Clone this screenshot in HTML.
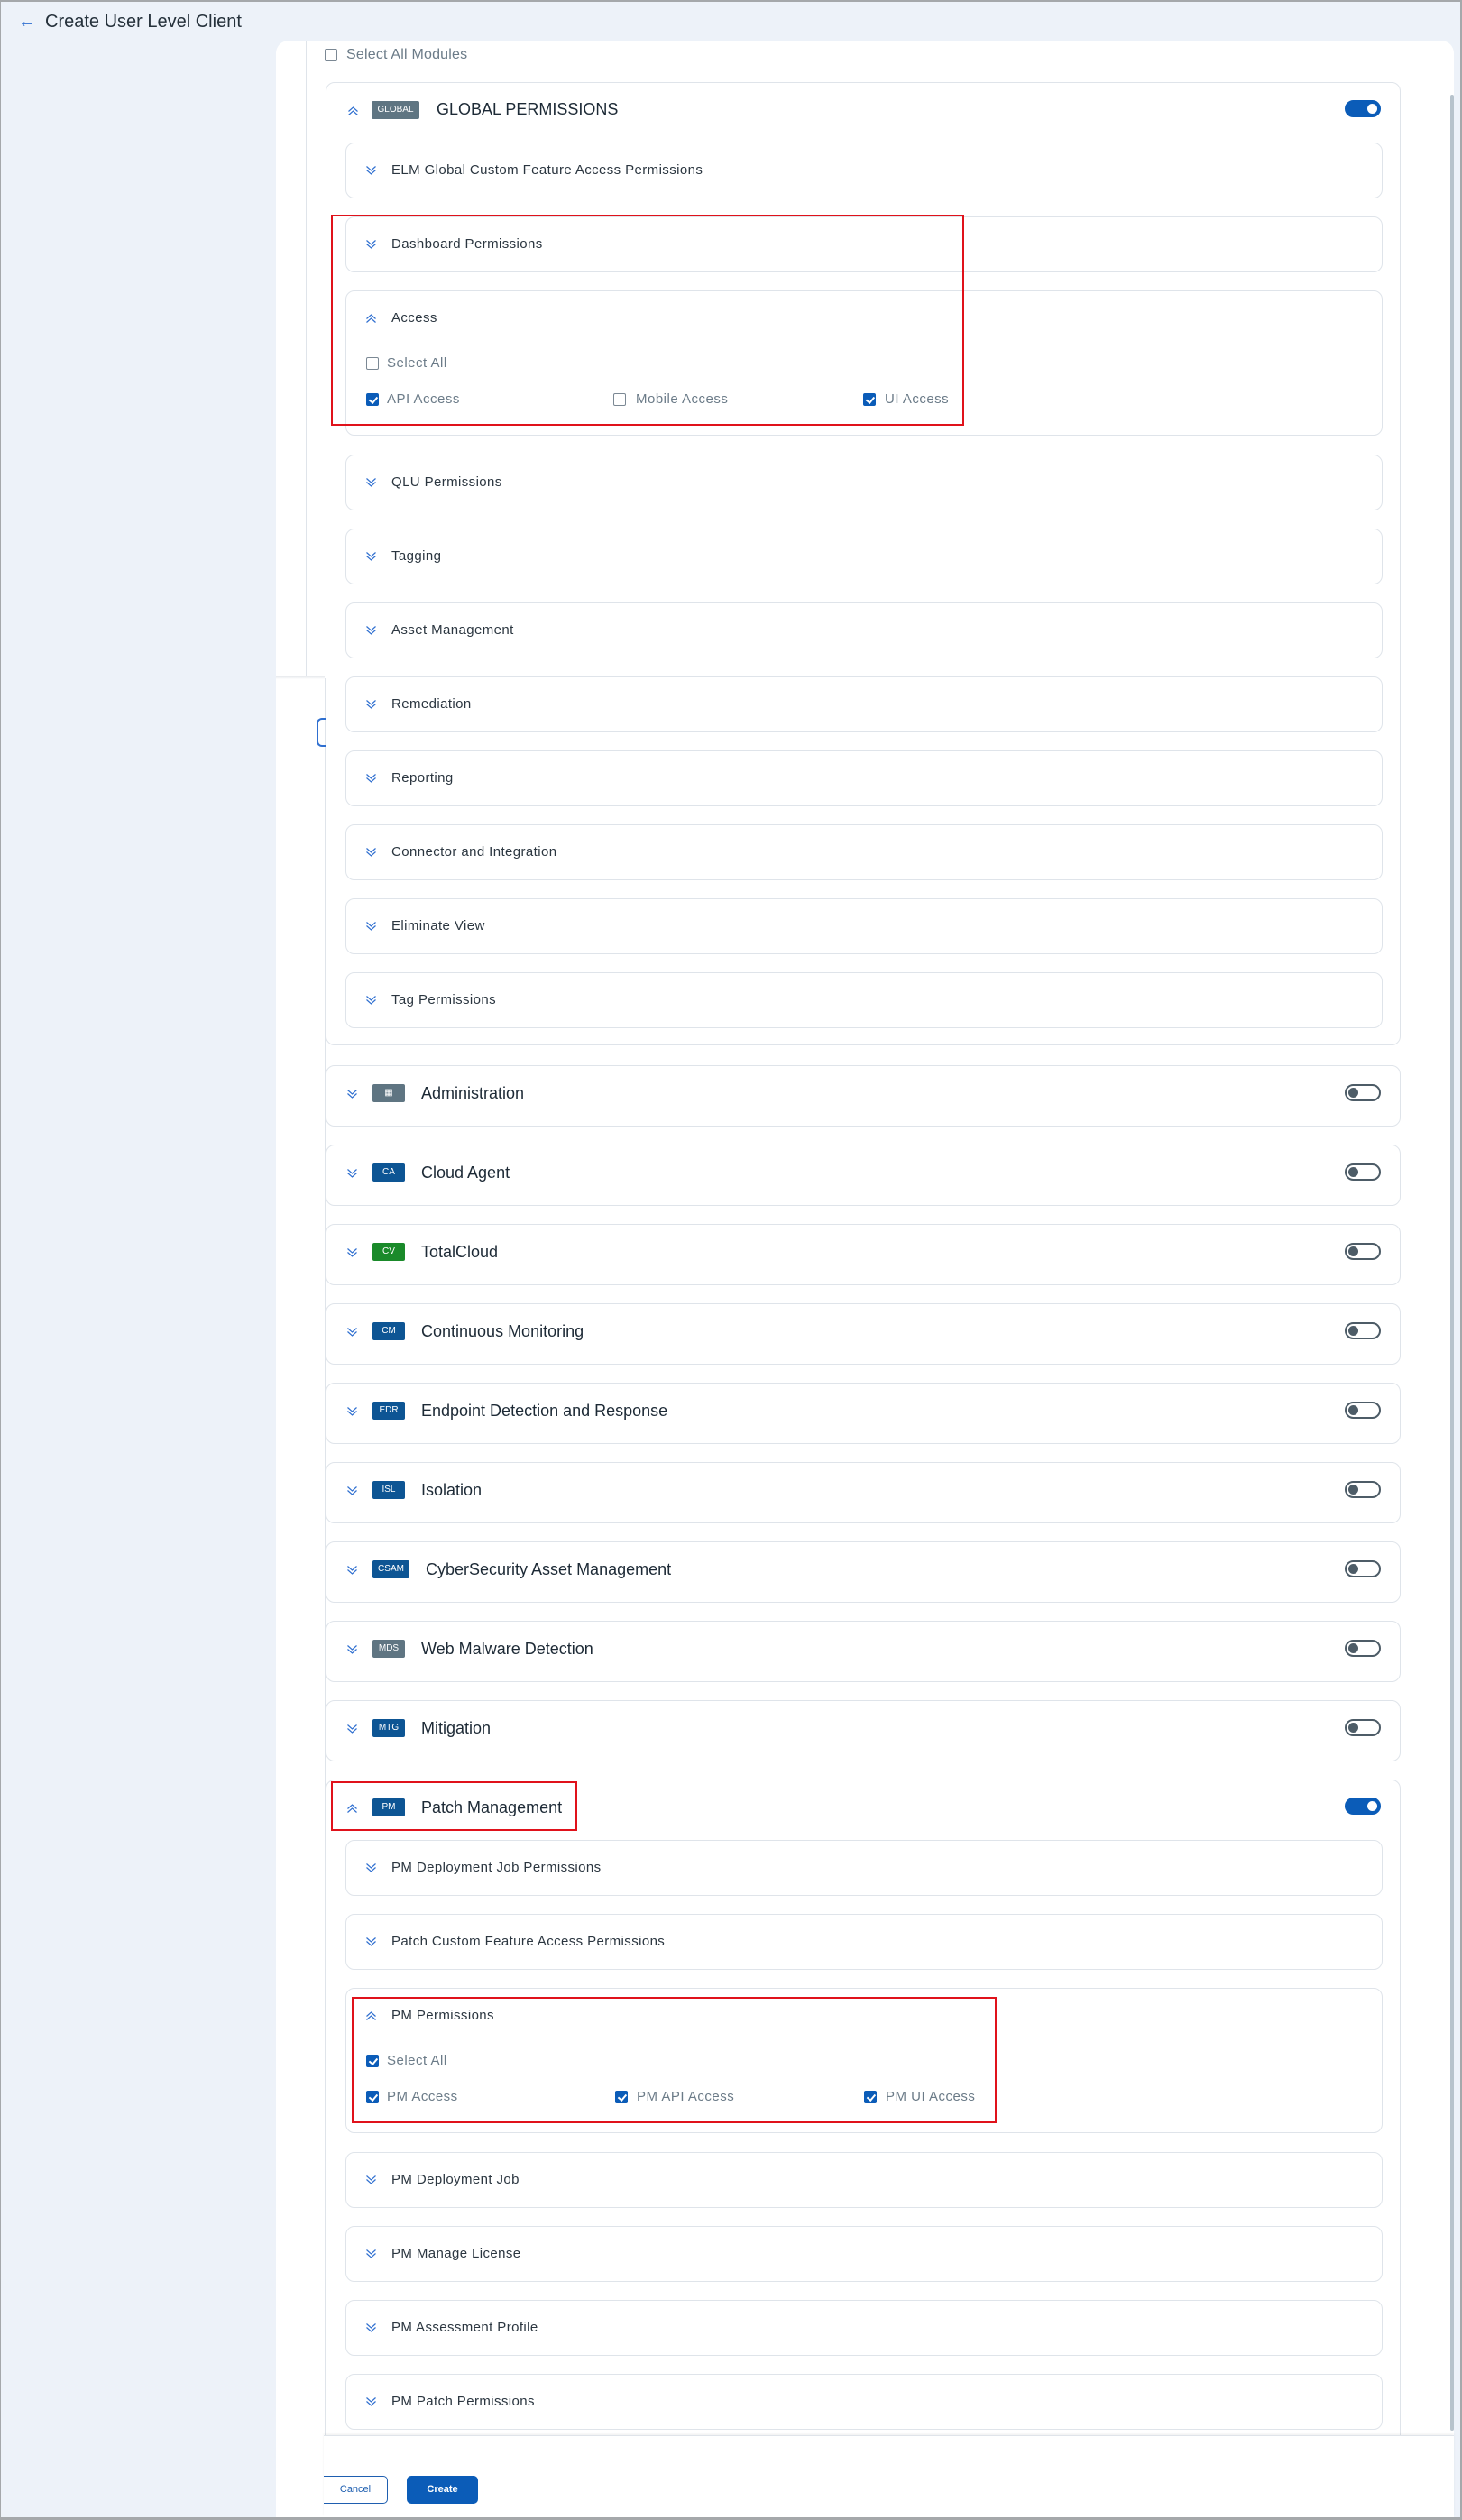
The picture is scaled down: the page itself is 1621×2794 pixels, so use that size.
<!DOCTYPE html>
<html><head><meta charset="utf-8"><style>
*{box-sizing:border-box;margin:0;padding:0}
body{width:1621px;height:2794px;position:relative;background:#edf2f9;font-family:"Liberation Sans",sans-serif;overflow:hidden}
.a{position:absolute}
.card{position:absolute;background:#fff;border:1px solid #dfe4ea;border-radius:10px}
.sub{left:383px;width:1150px;height:62px}
.sl{position:absolute;left:434px;font-size:15px;letter-spacing:0.4px;color:#2b3640;line-height:16px}
.chev{position:absolute;width:13px;height:12px}
.mod{left:361px;width:1192px;height:68px}
.badge{position:absolute;left:413px;height:20px;width:36px;border-radius:2px;color:#fff;font-size:10px;line-height:20px;text-align:center;background:#0d5594}
.mt{position:absolute;left:467px;font-size:18px;color:#1d2a36;line-height:20px}
.tog{position:absolute;left:1491px;width:40px;height:19px;border-radius:10px;border:2px solid #4d5c67;background:#fff}
.tog::after{content:"";position:absolute;left:2px;top:2px;width:11px;height:11px;border-radius:50%;background:#4d5c67}
.tog.on{background:#0b5cb8;border-color:#0b5cb8}
.tog.on::after{left:auto;right:2px;background:#fff}
.cb{position:absolute;width:14px;height:14px;border-radius:2px;border:1.5px solid #7b8894;background:#fff}
.cb.on{background:#0b5cb8;border-color:#0b5cb8}
.cb.on::after{content:"";position:absolute;left:3.5px;top:0.5px;width:3.5px;height:7px;border:solid #fff;border-width:0 2px 2px 0;transform:rotate(40deg)}
.cl{position:absolute;font-size:15px;letter-spacing:0.5px;color:#6b7b88;line-height:16px}
.red{position:absolute;border:2px solid #e0121b}
</style></head><body>
<svg width="0" height="0" style="position:absolute"><defs>
<symbol id="dn" viewBox="0 0 13 12"><path d="M1.5 1.5 L6.5 6 L11.5 1.5 M1.5 5.5 L6.5 10 L11.5 5.5" fill="none" stroke="#2f6fd0" stroke-width="1.2"/></symbol>
<symbol id="up" viewBox="0 0 13 12"><path d="M1.5 6.5 L6.5 2 L11.5 6.5 M1.5 10.5 L6.5 6 L11.5 10.5" fill="none" stroke="#2f6fd0" stroke-width="1.2"/></symbol>
</defs></svg>
<div class="a" style="left:0;top:0;width:1621px;height:2px;background:#a5a8ab"></div>
<div class="a" style="left:0;top:0;width:1px;height:2794px;background:#a5a8ab"></div>
<div class="a" style="left:1619px;top:0;width:2px;height:2794px;background:#a5a8ab"></div>
<div class="a" style="left:0;top:2791px;width:1621px;height:3px;background:#a5a8ab"></div>

<div class="a" style="left:20px;top:13px;font-size:20px;color:#2f6fd0">&#8592;</div>
<div class="a" style="left:50px;top:13px;font-size:20px;color:#25313b">Create User Level Client</div>

<div class="a" style="left:306px;top:45px;width:1306px;height:2746px;background:#fff;border-radius:14px 14px 0 0"></div>
<div class="a" style="left:339px;top:45px;width:1px;height:707px;background:#dfe4ea"></div>
<div class="a" style="left:306px;top:750px;width:54px;height:3px;background:linear-gradient(#e6e9ec,#fff)"></div>
<div class="a" style="left:360px;top:752px;width:1px;height:1948px;background:#dfe4ea"></div>
<div class="a" style="left:351px;top:796px;width:14px;height:32px;border:2px solid #2f6fd0;border-right:none;border-radius:6px 0 0 6px"></div>
<div class="a" style="left:1575px;top:45px;width:1px;height:2655px;background:#dfe4ea"></div>
<div class="a" style="left:1608px;top:105px;width:4px;height:2590px;background:#b7c3cc;border-radius:2px"></div>

<div class="cb" style="left:360px;top:54px"></div>
<div class="cl" style="left:384px;top:53px;font-size:16px;letter-spacing:0.2px">Select All Modules</div>

<!-- Global card -->
<div class="card" style="left:361px;top:91px;width:1192px;height:1068px"></div>
<svg class="chev" style="left:385px;top:117px"><use href="#up"/></svg>
<div class="badge" style="left:412px;top:112px;width:53px;background:#5f7582;font-size:10px">GLOBAL</div>
<div class="mt" style="left:484px;top:111px">GLOBAL PERMISSIONS</div>
<div class="tog on" style="top:111px"></div>

<div class="card sub" style="top:158px"></div>
<svg class="chev" style="left:405px;top:183px"><use href="#dn"/></svg>
<div class="sl" style="top:181px">ELM Global Custom Feature Access Permissions</div>

<div class="card sub" style="top:240px"></div>
<svg class="chev" style="left:405px;top:265px"><use href="#dn"/></svg>
<div class="sl" style="top:263px">Dashboard Permissions</div>

<div class="card sub" style="top:322px;height:161px"></div>
<svg class="chev" style="left:405px;top:347px"><use href="#up"/></svg>
<div class="sl" style="top:345px">Access</div>
<div class="cb" style="left:406px;top:396px"></div>
<div class="cl" style="left:429px;top:395px">Select All</div>
<div class="cb on" style="left:406px;top:436px"></div>
<div class="cl" style="left:429px;top:435px">API Access</div>
<div class="cb" style="left:680px;top:436px"></div>
<div class="cl" style="left:705px;top:435px">Mobile Access</div>
<div class="cb on" style="left:957px;top:436px"></div>
<div class="cl" style="left:981px;top:435px">UI Access</div>
<div class="red" style="left:367px;top:238px;width:702px;height:234px"></div>

<div class="card sub" style="top:504px"></div><svg class="chev" style="left:405px;top:529px"><use href="#dn"/></svg><div class="sl" style="top:527px">QLU Permissions</div>
<div class="card sub" style="top:586px"></div><svg class="chev" style="left:405px;top:611px"><use href="#dn"/></svg><div class="sl" style="top:609px">Tagging</div>
<div class="card sub" style="top:668px"></div><svg class="chev" style="left:405px;top:693px"><use href="#dn"/></svg><div class="sl" style="top:691px">Asset Management</div>
<div class="card sub" style="top:750px"></div><svg class="chev" style="left:405px;top:775px"><use href="#dn"/></svg><div class="sl" style="top:773px">Remediation</div>
<div class="card sub" style="top:832px"></div><svg class="chev" style="left:405px;top:857px"><use href="#dn"/></svg><div class="sl" style="top:855px">Reporting</div>
<div class="card sub" style="top:914px"></div><svg class="chev" style="left:405px;top:939px"><use href="#dn"/></svg><div class="sl" style="top:937px">Connector and Integration</div>
<div class="card sub" style="top:996px"></div><svg class="chev" style="left:405px;top:1021px"><use href="#dn"/></svg><div class="sl" style="top:1019px">Eliminate View</div>
<div class="card sub" style="top:1078px"></div><svg class="chev" style="left:405px;top:1103px"><use href="#dn"/></svg><div class="sl" style="top:1101px">Tag Permissions</div>

<!-- modules -->
<div class="card mod" style="top:1181px"></div><svg class="chev" style="left:384px;top:1207px"><use href="#dn"/></svg><div class="badge" style="top:1202px;background:#5f7582">&#9638;</div><div class="mt" style="top:1202px">Administration</div><div class="tog" style="top:1202px"></div>
<div class="card mod" style="top:1269px"></div><svg class="chev" style="left:384px;top:1295px"><use href="#dn"/></svg><div class="badge" style="top:1290px">CA</div><div class="mt" style="top:1290px">Cloud Agent</div><div class="tog" style="top:1290px"></div>
<div class="card mod" style="top:1357px"></div><svg class="chev" style="left:384px;top:1383px"><use href="#dn"/></svg><div class="badge" style="top:1378px;background:#1a8a2a">CV</div><div class="mt" style="top:1378px">TotalCloud</div><div class="tog" style="top:1378px"></div>
<div class="card mod" style="top:1445px"></div><svg class="chev" style="left:384px;top:1471px"><use href="#dn"/></svg><div class="badge" style="top:1466px">CM</div><div class="mt" style="top:1466px">Continuous Monitoring</div><div class="tog" style="top:1466px"></div>
<div class="card mod" style="top:1533px"></div><svg class="chev" style="left:384px;top:1559px"><use href="#dn"/></svg><div class="badge" style="top:1554px">EDR</div><div class="mt" style="top:1554px">Endpoint Detection and Response</div><div class="tog" style="top:1554px"></div>
<div class="card mod" style="top:1621px"></div><svg class="chev" style="left:384px;top:1647px"><use href="#dn"/></svg><div class="badge" style="top:1642px">ISL</div><div class="mt" style="top:1642px">Isolation</div><div class="tog" style="top:1642px"></div>
<div class="card mod" style="top:1709px"></div><svg class="chev" style="left:384px;top:1735px"><use href="#dn"/></svg><div class="badge" style="top:1730px;width:41px">CSAM</div><div class="mt" style="top:1730px;left:472px">CyberSecurity Asset Management</div><div class="tog" style="top:1730px"></div>
<div class="card mod" style="top:1797px"></div><svg class="chev" style="left:384px;top:1823px"><use href="#dn"/></svg><div class="badge" style="top:1818px;background:#5f7582">MDS</div><div class="mt" style="top:1818px">Web Malware Detection</div><div class="tog" style="top:1818px"></div>
<div class="card mod" style="top:1885px"></div><svg class="chev" style="left:384px;top:1911px"><use href="#dn"/></svg><div class="badge" style="top:1906px">MTG</div><div class="mt" style="top:1906px">Mitigation</div><div class="tog" style="top:1906px"></div>

<!-- PM -->
<div class="card" style="left:361px;top:1973px;width:1192px;height:800px"></div>
<svg class="chev" style="left:384px;top:1999px"><use href="#up"/></svg>
<div class="badge" style="top:1994px">PM</div>
<div class="mt" style="top:1994px">Patch Management</div>
<div class="tog on" style="top:1993px"></div>
<div class="red" style="left:367px;top:1975px;width:273px;height:55px"></div>

<div class="card sub" style="top:2040px"></div><svg class="chev" style="left:405px;top:2065px"><use href="#dn"/></svg><div class="sl" style="top:2063px">PM Deployment Job Permissions</div>
<div class="card sub" style="top:2122px"></div><svg class="chev" style="left:405px;top:2147px"><use href="#dn"/></svg><div class="sl" style="top:2145px">Patch Custom Feature Access Permissions</div>
<div class="card sub" style="top:2204px;height:161px"></div>
<svg class="chev" style="left:405px;top:2229px"><use href="#up"/></svg><div class="sl" style="top:2227px">PM Permissions</div>
<div class="cb on" style="left:406px;top:2278px"></div><div class="cl" style="left:429px;top:2277px">Select All</div>
<div class="cb on" style="left:406px;top:2318px"></div><div class="cl" style="left:429px;top:2317px">PM Access</div>
<div class="cb on" style="left:682px;top:2318px"></div><div class="cl" style="left:706px;top:2317px">PM API Access</div>
<div class="cb on" style="left:958px;top:2318px"></div><div class="cl" style="left:982px;top:2317px">PM UI Access</div>
<div class="red" style="left:390px;top:2214px;width:715px;height:140px"></div>
<div class="card sub" style="top:2386px"></div><svg class="chev" style="left:405px;top:2411px"><use href="#dn"/></svg><div class="sl" style="top:2409px">PM Deployment Job</div>
<div class="card sub" style="top:2468px"></div><svg class="chev" style="left:405px;top:2493px"><use href="#dn"/></svg><div class="sl" style="top:2491px">PM Manage License</div>
<div class="card sub" style="top:2550px"></div><svg class="chev" style="left:405px;top:2575px"><use href="#dn"/></svg><div class="sl" style="top:2573px">PM Assessment Profile</div>
<div class="card sub" style="top:2632px"></div><svg class="chev" style="left:405px;top:2657px"><use href="#dn"/></svg><div class="sl" style="top:2655px">PM Patch Permissions</div>

<!-- footer -->
<div class="a" style="left:359px;top:2700px;width:1253px;height:91px;background:#fff;border-top:1px solid #dfe4ea;box-shadow:0 -2px 3px rgba(0,0,0,0.05)"></div>
<div class="a" style="left:359px;top:2745px;width:71px;height:31px;border:1.5px solid #1f5fb0;border-left:none;border-radius:0 5px 5px 0;color:#1f5fb0;font-size:11px;line-height:28px;text-align:center">Cancel</div>
<div class="a" style="left:451px;top:2745px;width:79px;height:31px;background:#0b5cb8;border-radius:5px;color:#fff;font-size:11px;font-weight:bold;line-height:31px;text-align:center">Create</div>
</body></html>
